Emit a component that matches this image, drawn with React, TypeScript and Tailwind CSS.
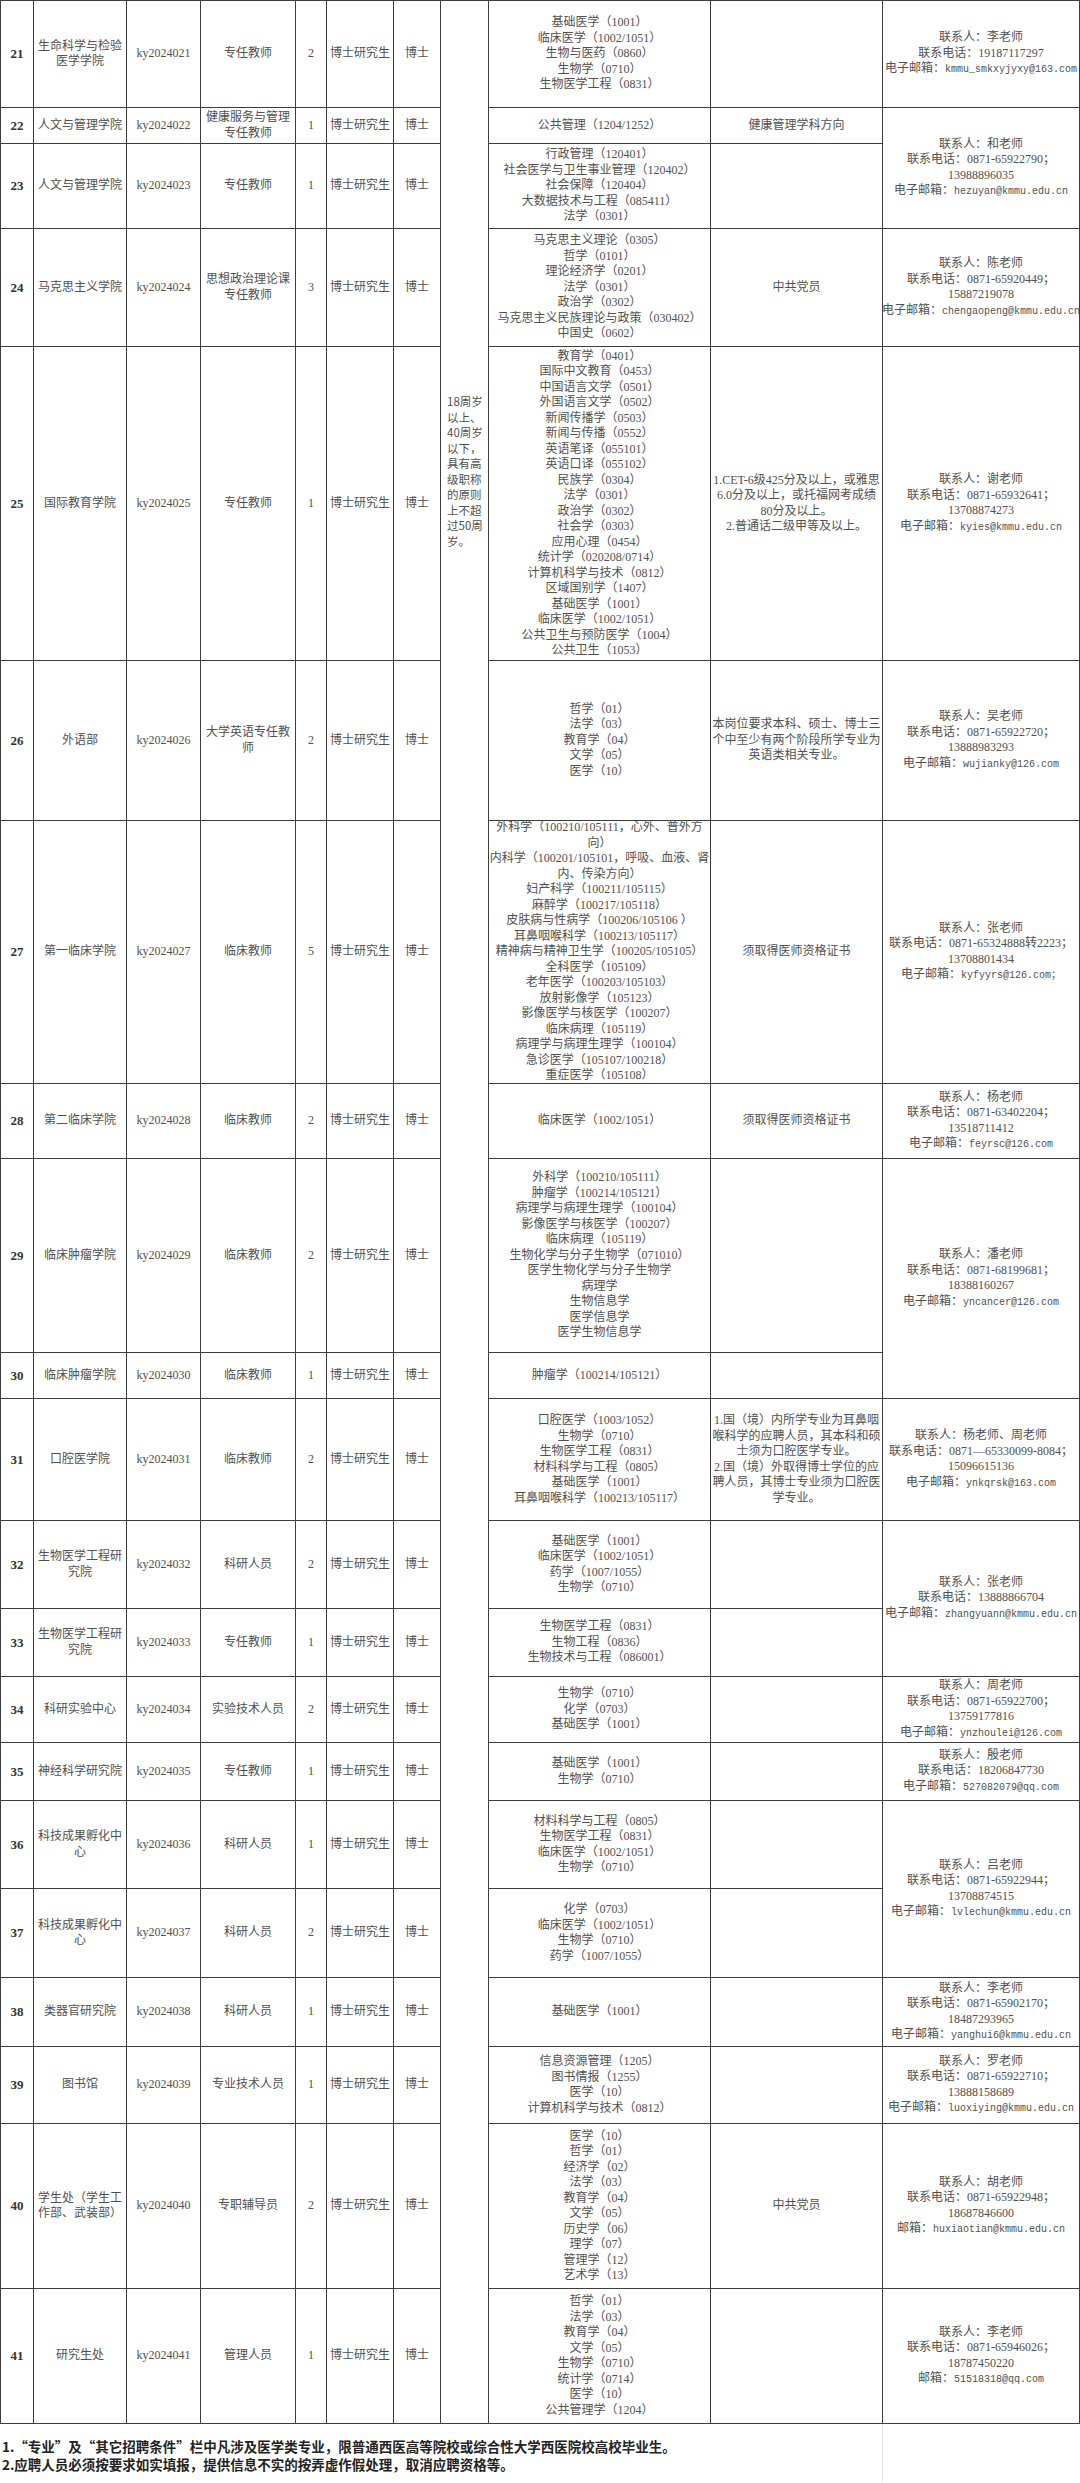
import React from "react";

type Row = {
  no: number;
  dept: string;
  code: string;
  pos: string;
  num: number;
  majors: string[];
  other?: string[];
  contact?: string[];
  span2?: boolean;
};

const rows: Row[] = [
  {
    no: 21,
    dept: "生命科学与检验医学学院",
    code: "ky2024021",
    pos: "专任教师",
    num: 2,
    majors: ["基础医学（1001）", "临床医学（1002/1051）", "生物与医药（0860）", "生物学（0710）", "生物医学工程（0831）"],
    contact: ["联系人：李老师", "联系电话：19187117297", "电子邮箱：kmmu_smkxyjyxy@163.com"],
  },
  {
    no: 22,
    dept: "人文与管理学院",
    code: "ky2024022",
    pos: "健康服务与管理专任教师",
    num: 1,
    majors: ["公共管理（1204/1252）"],
    other: ["健康管理学科方向"],
    contact: ["联系人：和老师", "联系电话：0871-65922790；", "13988896035", "电子邮箱：hezuyan@kmmu.edu.cn"],
    span2: true,
  },
  {
    no: 23,
    dept: "人文与管理学院",
    code: "ky2024023",
    pos: "专任教师",
    num: 1,
    majors: ["行政管理（120401）", "社会医学与卫生事业管理（120402）", "社会保障（120404）", "大数据技术与工程（085411）", "法学（0301）"],
  },
  {
    no: 24,
    dept: "马克思主义学院",
    code: "ky2024024",
    pos: "思想政治理论课专任教师",
    num: 3,
    majors: ["马克思主义理论（0305）", "哲学（0101）", "理论经济学（0201）", "法学（0301）", "政治学（0302）", "马克思主义民族理论与政策（030402）", "中国史（0602）"],
    other: ["中共党员"],
    contact: ["联系人：陈老师", "联系电话：0871-65920449；", "15887219078", "电子邮箱：chengaopeng@kmmu.edu.cn"],
  },
  {
    no: 25,
    dept: "国际教育学院",
    code: "ky2024025",
    pos: "专任教师",
    num: 1,
    majors: [
      "教育学（0401）", "国际中文教育（0453）", "中国语言文学（0501）", "外国语言文学（0502）", "新闻传播学（0503）",
      "新闻与传播（0552）", "英语笔译（055101）", "英语口译（055102）", "民族学（0304）", "法学（0301）",
      "政治学（0302）", "社会学（0303）", "应用心理（0454）", "统计学（020208/0714）", "计算机科学与技术（0812）",
      "区域国别学（1407）", "基础医学（1001）", "临床医学（1002/1051）", "公共卫生与预防医学（1004）", "公共卫生（1053）",
    ],
    other: ["1.CET-6级425分及以上，或雅思", "6.0分及以上，或托福网考成绩", "80分及以上。", "2.普通话二级甲等及以上。"],
    contact: ["联系人：谢老师", "联系电话：0871-65932641；", "13708874273", "电子邮箱：kyies@kmmu.edu.cn"],
  },
  {
    no: 26,
    dept: "外语部",
    code: "ky2024026",
    pos: "大学英语专任教师",
    num: 2,
    majors: ["哲学（01）", "法学（03）", "教育学（04）", "文学（05）", "医学（10）"],
    other: ["本岗位要求本科、硕士、博士三", "个中至少有两个阶段所学专业为", "英语类相关专业。"],
    contact: ["联系人：吴老师", "联系电话：0871-65922720；", "13888983293", "电子邮箱：wujianky@126.com"],
  },
  {
    no: 27,
    dept: "第一临床学院",
    code: "ky2024027",
    pos: "临床教师",
    num: 5,
    majors: [
      "外科学（100210/105111，心外、普外方", "向）", "内科学（100201/105101，呼吸、血液、肾", "内、传染方向）",
      "妇产科学（100211/105115）", "麻醉学（100217/105118）", "皮肤病与性病学（100206/105106 ）", "耳鼻咽喉科学（100213/105117）",
      "精神病与精神卫生学（100205/105105）", "全科医学（105109）", "老年医学（100203/105103）", "放射影像学（105123）",
      "影像医学与核医学（100207）", "临床病理（105119）", "病理学与病理生理学（100104）", "急诊医学（105107/100218）", "重症医学（105108）",
    ],
    other: ["须取得医师资格证书"],
    contact: ["联系人：张老师", "联系电话：0871-65324888转2223；", "13708801434", "电子邮箱：kyfyyrs@126.com；"],
  },
  {
    no: 28,
    dept: "第二临床学院",
    code: "ky2024028",
    pos: "临床教师",
    num: 2,
    majors: ["临床医学（1002/1051）"],
    other: ["须取得医师资格证书"],
    contact: ["联系人：杨老师", "联系电话：0871-63402204；", "13518711412", "电子邮箱：feyrsc@126.com"],
  },
  {
    no: 29,
    dept: "临床肿瘤学院",
    code: "ky2024029",
    pos: "临床教师",
    num: 2,
    majors: [
      "外科学（100210/105111）", "肿瘤学（100214/105121）", "病理学与病理生理学（100104）", "影像医学与核医学（100207）",
      "临床病理（105119）", "生物化学与分子生物学（071010）", "医学生物化学与分子生物学", "病理学", "生物信息学", "医学信息学", "医学生物信息学",
    ],
    contact: ["联系人：潘老师", "联系电话：0871-68199681；", "18388160267", "电子邮箱：yncancer@126.com"],
    span2: true,
  },
  {
    no: 30,
    dept: "临床肿瘤学院",
    code: "ky2024030",
    pos: "临床教师",
    num: 1,
    majors: ["肿瘤学（100214/105121）"],
  },
  {
    no: 31,
    dept: "口腔医学院",
    code: "ky2024031",
    pos: "临床教师",
    num: 2,
    majors: ["口腔医学（1003/1052）", "生物学（0710）", "生物医学工程（0831）", "材料科学与工程（0805）", "基础医学（1001）", "耳鼻咽喉科学（100213/105117）"],
    other: ["1.国（境）内所学专业为耳鼻咽", "喉科学的应聘人员，其本科和硕", "士须为口腔医学专业。", "2.国（境）外取得博士学位的应", "聘人员，其博士专业须为口腔医", "学专业。"],
    contact: ["联系人：杨老师、周老师", "联系电话：0871—65330099-8084；", "15096615136", "电子邮箱：ynkqrsk@163.com"],
  },
  {
    no: 32,
    dept: "生物医学工程研究院",
    code: "ky2024032",
    pos: "科研人员",
    num: 2,
    majors: ["基础医学（1001）", "临床医学（1002/1051）", "药学（1007/1055）", "生物学（0710）"],
    contact: ["联系人：张老师", "联系电话：13888866704", "电子邮箱：zhangyuann@kmmu.edu.cn"],
    span2: true,
  },
  {
    no: 33,
    dept: "生物医学工程研究院",
    code: "ky2024033",
    pos: "专任教师",
    num: 1,
    majors: ["生物医学工程（0831）", "生物工程（0836）", "生物技术与工程（086001）"],
  },
  {
    no: 34,
    dept: "科研实验中心",
    code: "ky2024034",
    pos: "实验技术人员",
    num: 2,
    majors: ["生物学（0710）", "化学（0703）", "基础医学（1001）"],
    contact: ["联系人：周老师", "联系电话：0871-65922700；", "13759177816", "电子邮箱：ynzhoulei@126.com"],
  },
  {
    no: 35,
    dept: "神经科学研究院",
    code: "ky2024035",
    pos: "专任教师",
    num: 1,
    majors: ["基础医学（1001）", "生物学（0710）"],
    contact: ["联系人：殷老师", "联系电话：18206847730", "电子邮箱：527082079@qq.com"],
  },
  {
    no: 36,
    dept: "科技成果孵化中心",
    code: "ky2024036",
    pos: "科研人员",
    num: 1,
    majors: ["材料科学与工程（0805）", "生物医学工程（0831）", "临床医学（1002/1051）", "生物学（0710）"],
    contact: ["联系人：吕老师", "联系电话：0871-65922944；", "13708874515", "电子邮箱：lvlechun@kmmu.edu.cn"],
    span2: true,
  },
  {
    no: 37,
    dept: "科技成果孵化中心",
    code: "ky2024037",
    pos: "科研人员",
    num: 2,
    majors: ["化学（0703）", "临床医学（1002/1051）", "生物学（0710）", "药学（1007/1055）"],
  },
  {
    no: 38,
    dept: "类器官研究院",
    code: "ky2024038",
    pos: "科研人员",
    num: 1,
    majors: ["基础医学（1001）"],
    contact: ["联系人：李老师", "联系电话：0871-65902170；", "18487293965", "电子邮箱：yanghui6@kmmu.edu.cn"],
  },
  {
    no: 39,
    dept: "图书馆",
    code: "ky2024039",
    pos: "专业技术人员",
    num: 1,
    majors: ["信息资源管理（1205）", "图书情报（1255）", "医学（10）", "计算机科学与技术（0812）"],
    contact: ["联系人：罗老师", "联系电话：0871-65922710；", "13888158689", "电子邮箱：luoxiying@kmmu.edu.cn"],
  },
  {
    no: 40,
    dept: "学生处（学生工作部、武装部）",
    code: "ky2024040",
    pos: "专职辅导员",
    num: 2,
    majors: ["医学（10）", "哲学（01）", "经济学（02）", "法学（03）", "教育学（04）", "文学（05）", "历史学（06）", "理学（07）", "管理学（12）", "艺术学（13）"],
    other: ["中共党员"],
    contact: ["联系人：胡老师", "联系电话：0871-65922948；", "18687846600", "邮箱：huxiaotian@kmmu.edu.cn"],
  },
  {
    no: 41,
    dept: "研究生处",
    code: "ky2024041",
    pos: "管理人员",
    num: 1,
    majors: ["哲学（01）", "法学（03）", "教育学（04）", "文学（05）", "生物学（0710）", "统计学（0714）", "医学（10）", "公共管理学（1204）"],
    contact: ["联系人：李老师", "联系电话：0871-65946026；", "18787450220", "邮箱：51518318@qq.com"],
  },
];

const ageLines = ["18周岁", "以上、", "40周岁", "以下，", "具有高", "级职称", "的原则", "上不超", "过50周", "岁。"];

const cell = "bg-white flex items-center justify-center text-center";

function Lines({ items }: { items: string[] }) {
  return (
    <div className="flex flex-col items-center">
      {items.map((t, i) => (
        <div key={i} className="whitespace-nowrap">
          {t}
        </div>
      ))}
    </div>
  );
}

function ContactLine({ text }: { text: string }) {
  if (text.includes("邮箱：")) {
    const i = text.indexOf("：") + 1;
    return (
      <div className="whitespace-nowrap">
        {text.slice(0, i)}
        <span className="font-['Liberation_Mono','Noto_Sans_CJK_SC',monospace] text-[10px]">{text.slice(i)}</span>
      </div>
    );
  }
  return <div className="whitespace-nowrap">{text}</div>;
}

export default function App() {
  return (
    <div className="w-[1080px] bg-white font-['Liberation_Serif','Noto_Sans_CJK_SC',serif] text-[12px] leading-[15.5px] text-[#505050]">
      <div className="grid grid-cols-[32px_92px_73px_94px_30px_66px_46px_47px_221px_171px_196px] grid-rows-[106px_35px_84px_117px_313px_159px_262px_74px_193px_45px_121px_87px_67px_65px_57px_87px_88px_68px_76px_164px_134px] gap-px bg-[#3c3c3c] p-px">
        {/* 年龄 merged column */}
        <div className="col-start-8 row-start-1 row-span-21 bg-white pl-[6px] pt-[393px] text-[11.5px] font-['Noto_Sans_CJK_SC',sans-serif]">
          {ageLines.map((t, i) => (
            <div key={i} className="whitespace-nowrap">
              {t}
            </div>
          ))}
        </div>

        {rows.map((r) => (
          <React.Fragment key={r.no}>
            <div className={`${cell} text-[13px] font-bold text-[#333]`}>{r.no}</div>
            <div className={`${cell} px-[3px]`}>{r.dept}</div>
            <div className={cell}>{r.code}</div>
            <div className={`${cell} px-[4px]`}>{r.pos}</div>
            <div className={cell}>{r.num}</div>
            <div className={cell}>博士研究生</div>
            <div className={cell}>博士</div>
            <div className={cell}>
              <Lines items={r.majors} />
            </div>
            <div className={cell}>{r.other ? <Lines items={r.other} /> : null}</div>
            {r.contact ? (
              <div className={`${cell} ${r.span2 ? "row-span-2" : ""}`}>
                <div className="flex flex-col items-center">
                  {r.contact.map((t, i) => (
                    <ContactLine key={i} text={t} />
                  ))}
                </div>
              </div>
            ) : null}
          </React.Fragment>
        ))}
      </div>

      {/* 备注 */}
      <div className="grid grid-cols-[882px_198px]">
        <div className="pt-[13px] pb-[9px] pl-[2px] font-['Noto_Sans_CJK_SC',sans-serif] text-[13.5px] font-bold leading-[18px] text-[#222]">
          <div className="whitespace-nowrap">1.“专业”及“其它招聘条件”栏中凡涉及医学类专业，限普通西医高等院校或综合性大学西医院校高校毕业生。</div>
          <div className="whitespace-nowrap">2.应聘人员必须按要求如实填报，提供信息不实的按弄虚作假处理，取消应聘资格等。</div>
        </div>
        <div className="border-l border-[#e6e6e6]" />
      </div>
    </div>
  );
}
